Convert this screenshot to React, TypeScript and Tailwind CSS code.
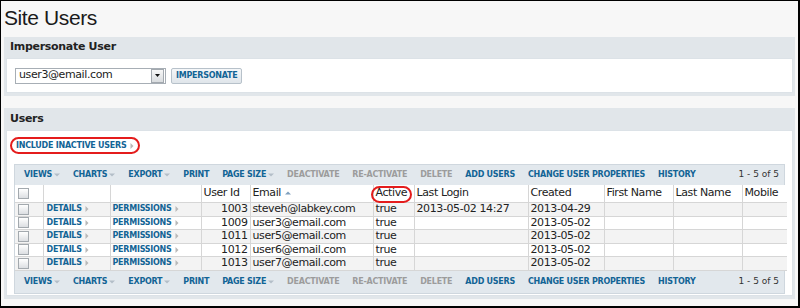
import React from 'react';

const users = [
  { id: 1003, email: 'steveh@labkey.com', active: 'true', lastLogin: '2013-05-02 14:27', created: '2013-04-29' },
  { id: 1009, email: 'user3@email.com', active: 'true', lastLogin: '', created: '2013-05-02' },
  { id: 1011, email: 'user5@email.com', active: 'true', lastLogin: '', created: '2013-05-02' },
  { id: 1012, email: 'user6@email.com', active: 'true', lastLogin: '', created: '2013-05-02' },
  { id: 1013, email: 'user7@email.com', active: 'true', lastLogin: '', created: '2013-05-02' },
];

const toolbarItems = [
  { label: 'Views', menu: true },
  { label: 'Charts', menu: true },
  { label: 'Export', menu: true },
  { label: 'Print' },
  { label: 'Page Size', menu: true },
  { label: 'Deactivate', disabled: true },
  { label: 'Re-Activate', disabled: true },
  { label: 'Delete', disabled: true },
  { label: 'Add Users' },
  { label: 'Change User Properties' },
  { label: 'History' },
];

const DownArrow = () => (
  <svg width="6" height="4" viewBox="0 0 6 4" className="ml-[2px]">
    <path d="M0 0.5h6L3 3.5z" fill="#b3bec8" />
  </svg>
);

const RightArrow = () => (
  <svg width="4" height="6" viewBox="0 0 4 6" className="ml-[3px]">
    <path d="M0.5 0l3 3-3 3z" fill="#b8b8b8" />
  </svg>
);

const Checkbox = () => (
  <span className="block w-[11px] h-[11px] border border-[#a3a9ae] bg-gradient-to-b from-white to-[#dcdfe2] ml-[1px]" />
);

const Toolbar = ({ className }: { className: string }) => (
  <div className={`flex items-center bg-[#e2e8ed] pl-[9px] pr-[5px] ${className}`}>
    <div className="flex items-center gap-[13px]">
      {toolbarItems.map((item) => (
        <span
          key={item.label}
          className={`flex items-center uppercase font-bold text-[8px] tracking-[-0.25px] ${item.disabled ? 'text-[#9c9c9c]' : 'text-[#126495]'}`}
        >
          {item.label}
          {item.menu && <DownArrow />}
        </span>
      ))}
    </div>
    <span className="ml-auto text-[9px] text-[#333]">1 - 5 of 5</span>
  </div>
);

const cell = 'border-r border-b border-[#d6d6d6] px-[2px] py-0 whitespace-nowrap overflow-hidden';

export default function App() {
  return (
    <div className="w-[800px] h-[308px] overflow-hidden bg-[#f7f7f7] border-black border-l border-t border-r-2 border-b-2 font-['DejaVu_Sans',sans-serif] text-[#222]">
      <h1 className="h-[36px] pl-[3px] pt-[1px] font-['Liberation_Sans',Arial,sans-serif] text-[21px] tracking-[-0.4px] text-[#1a1a1a]">
        Site Users
      </h1>

      <section className="mx-[3px] bg-[#e1e6ea] px-[2px] pb-[3px]">
        <h2 className="h-[21px] pl-[4px] flex items-center font-bold text-[11px] tracking-[-0.3px] text-[#222]">
          Impersonate User
        </h2>
        <div className="h-[35px] bg-white border border-[#dce2e7] flex items-center pl-[8px]">
          <div className="flex items-center w-[151px] h-[16px] border border-[#a7aeb5] bg-white">
            <span className="flex-1 pl-[3px] text-[11px] tracking-[-0.4px] text-[#222]">user3@email.com</span>
            <span className="w-[13px] h-[14px] mr-[1px] border border-[#a3a9af] bg-gradient-to-b from-[#f7f7f7] to-[#d9dcdf] flex items-center justify-center">
              <svg width="5" height="3" viewBox="0 0 5 3">
                <path d="M0 0h5L2.5 3z" fill="#111" />
              </svg>
            </span>
          </div>
          <button className="ml-[5px] h-[16px] px-[4px] rounded-[2px] border border-[#b7c1ca] bg-gradient-to-b from-[#f5f7f9] to-[#dfe5ea] uppercase font-bold text-[8px] tracking-[-0.25px] text-[#126495]">
            Impersonate
          </button>
        </div>
      </section>

      <section className="mx-[3px] mt-[12px] bg-[#e1e6ea] px-[2px] pb-[3px]">
        <h2 className="h-[22px] pl-[4px] flex items-center font-bold text-[11px] tracking-[-0.3px] text-[#222]">
          Users
        </h2>
        <div className="h-[166px] bg-white border border-[#dce2e7] pt-[6px] pl-[3px] pr-[7px]">
          <div className="flex">
            <span className="flex items-center h-[17px] px-[4px] border-2 border-[#e41c1c] rounded-full uppercase font-bold text-[8px] tracking-[-0.25px] text-[#126495]">
              Include Inactive Users
              <RightArrow />
            </span>
          </div>

          <div className="mt-[10px] ml-[4px] border border-[#cfd7de]">
            <Toolbar className="h-[20px]" />
            <div className="relative">
              <table className="table-fixed border-collapse w-full text-[11px] leading-[12px] tracking-[-0.4px]">
                <colgroup>
                  <col className="w-[28px]" />
                  <col className="w-[67px]" />
                  <col className="w-[91px]" />
                  <col className="w-[49px]" />
                  <col className="w-[123px]" />
                  <col className="w-[41px]" />
                  <col className="w-[114px]" />
                  <col className="w-[76px]" />
                  <col className="w-[69px]" />
                  <col className="w-[69px]" />
                  <col className="w-[45px]" />
                </colgroup>
                <thead>
                  <tr className="h-[17px] bg-white text-left">
                    <th className={`${cell} font-normal`}>
                      <Checkbox />
                    </th>
                    <th className={`${cell} font-normal`} />
                    <th className={`${cell} font-normal`} />
                    <th className={`${cell} font-normal`}>User Id</th>
                    <th className={`${cell} font-normal`}>
                      <span className="flex items-center">
                        Email
                        <svg width="6" height="4" viewBox="0 0 6 4" className="ml-[4px]">
                          <path d="M0 3.5h6L3 0.5z" fill="#7f9fbd" />
                        </svg>
                      </span>
                    </th>
                    <th className={`${cell} font-normal`}>Active</th>
                    <th className={`${cell} font-normal`}>Last Login</th>
                    <th className={`${cell} font-normal`}>Created</th>
                    <th className={`${cell} font-normal`}>First Name</th>
                    <th className={`${cell} font-normal`}>Last Name</th>
                    <th className={`${cell} font-normal border-r-0`}>Mobile</th>
                  </tr>
                </thead>
                <tbody>
                  {users.map((u, i) => (
                    <tr key={u.id} className={i % 2 === 0 ? 'h-[14px] bg-[#f3f3f3]' : 'h-[13px] bg-white'}>
                      <td className={cell}>
                        <Checkbox />
                      </td>
                      <td className={cell}>
                        <span className="flex items-center pl-[1px] uppercase font-bold text-[8px] leading-[10px] tracking-[-0.25px] text-[#126495]">
                          Details
                          <RightArrow />
                        </span>
                      </td>
                      <td className={cell}>
                        <span className="flex items-center uppercase font-bold text-[8px] leading-[10px] tracking-[-0.25px] text-[#126495]">
                          Permissions
                          <RightArrow />
                        </span>
                      </td>
                      <td className={`${cell} text-right`}>{u.id}</td>
                      <td className={cell}>{u.email}</td>
                      <td className={cell}>{u.active}</td>
                      <td className={cell}>{u.lastLogin}</td>
                      <td className={cell}>{u.created}</td>
                      <td className={cell} />
                      <td className={cell} />
                      <td className={`${cell} border-r-0`} />
                    </tr>
                  ))}
                </tbody>
              </table>
              <span className="absolute left-[356px] top-[1px] w-[41px] h-[17px] border-2 border-[#e41c1c] rounded-full" />
            </div>
            <Toolbar className="h-[22px]" />
          </div>
        </div>
      </section>
    </div>
  );
}
